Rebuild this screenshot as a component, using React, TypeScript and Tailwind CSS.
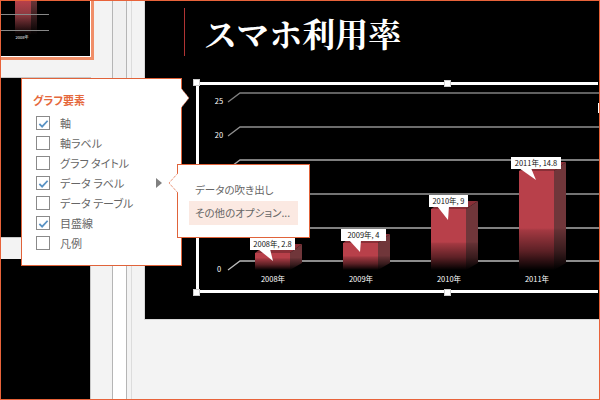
const font = { fontFamily: '"Noto Sans CJK JP", "Liberation Sans", sans-serif' };

const options = [
  { label: "軸", checked: true },
  { label: "軸ラベル", checked: false },
  { label: "グラフ タイトル", checked: false },
  { label: "データ ラベル", checked: true, more: true },
  { label: "データ テーブル", checked: false },
  { label: "目盛線", checked: true },
  { label: "凡例", checked: false },
];

const bars = [
  { id: "a", x: 254, top: 253, sideTop: 244, fade: 258, axis: "2008年", label: "2008年, 2.8", lx: 249, ly: 238, lw: 45, tip: [272, 261] },
  { id: "b", x: 342, top: 243, sideTop: 234, fade: 256, axis: "2009年", label: "2009年, 4", lx: 340, ly: 229, lw: 45, tip: [359, 252] },
  { id: "c", x: 430, top: 209, sideTop: 201, fade: 242, axis: "2010年", label: "2010年, 9", lx: 428, ly: 195, lw: 39, tip: [447, 220] },
  { id: "d", x: 518, top: 171, sideTop: 162, fade: 228, axis: "2011年", label: "2011年, 14.8", lx: 510, ly: 157, lw: 50, tip: [535, 180] },
];

// 15, 10 and 5 sit behind the popups, so they have no label here
const grid = [
  { y: 93, label: "25", color: "#808080" },
  { y: 127, label: "20", color: "#909090" },
  { y: 160, label: "", color: "#a8a8a8" },
  { y: 194, label: "", color: "#999999" },
  { y: 228, label: "", color: "#aaaaaa" },
  { y: 261, label: "0", color: "#bbbbbb" },
];

function Thumbnail() {
  return (
    <svg viewBox="0 0 89 55" className="h-full w-full" style={font}>
      <defs>
        <linearGradient id="thumb-front" x1="0" x2="0" y1="0" y2="1">
          <stop offset="0" stopColor="#b8404a" />
          <stop offset="0.4" stopColor="#8c3a40" />
          <stop offset="1" stopColor="#000" />
        </linearGradient>
        <linearGradient id="thumb-side" x1="0" x2="0" y1="0" y2="1">
          <stop offset="0" stopColor="#6a3538" />
          <stop offset="1" stopColor="#000" />
        </linearGradient>
      </defs>
      <rect x="14" y="0" width="16" height="34" fill="url(#thumb-front)" />
      <rect x="30" y="0" width="6" height="34" fill="url(#thumb-side)" />
      <path d="M0 13.5H48M0 29.5H48" stroke="#888" strokeWidth="1" />
      <text x="21" y="38" textAnchor="middle" fontSize="4" fill="#fff">2008年</text>
    </svg>
  );
}

function Chart() {
  return (
    <svg viewBox="195 82 404 211" className="absolute left-[-3px] top-[-3px] h-[211px] w-[404px]" style={font}>
      <defs>
        {bars.map((b) => (
          <linearGradient key={b.id} id={`fade-${b.id}`} gradientUnits="userSpaceOnUse" x1="0" x2="0" y1={b.fade} y2="270">
            <stop offset="0" stopColor="#000" stopOpacity="0" />
            <stop offset="0.06" stopColor="#000" stopOpacity="0.12" />
            <stop offset="0.55" stopColor="#000" stopOpacity="0.5" />
            <stop offset="1" stopColor="#000" stopOpacity="1" />
          </linearGradient>
        ))}
      </defs>
      {grid.map((g) => (
        <g key={g.y}>
          <path d={`M227 ${g.y + 9}L239 ${g.y}H598`} fill="none" stroke={g.color} strokeWidth="1.3" />
          <text x="218" y={g.y + 11} textAnchor="middle" fontSize="7.5" fill="#fff">{g.label}</text>
        </g>
      ))}
      {bars.map((b) => (
        <g key={b.id}>
          <polygon points={`${b.x},${b.top} ${b.x + 12},${b.sideTop} ${b.x + 47},${b.sideTop} ${b.x + 35},${b.top}`} fill="#8a2f37" />
          <polygon points={`${b.x + 35},${b.top} ${b.x + 47},${b.sideTop} ${b.x + 47},263 ${b.x + 35},270`} fill="#70363a" />
          <rect x={b.x} y={b.top} width="35" height={270 - b.top} fill="#b8404a" />
          <rect x={b.x} y={b.fade} width="47" height={270 - b.fade} fill={`url(#fade-${b.id})`} />
          <polygon points={`${b.lx + 8},${b.ly + 11} ${b.tip[0]},${b.tip[1]} ${b.lx + 20},${b.ly + 11}`} fill="#fff" />
          <rect x={b.lx} y={b.ly} width={b.lw} height="12" fill="#fff" />
          <text x={b.lx + b.lw / 2} y={b.ly + 9} textAnchor="middle" fontSize="7.5" fill="#111">{b.label}</text>
          <text x={b.x + 18} y="282" textAnchor="middle" fontSize="7.5" fill="#fff">{b.axis}</text>
        </g>
      ))}
    </svg>
  );
}

function Handle({ className }: { className: string }) {
  return <div className={`absolute h-[7px] w-[7px] border border-[#ccc] bg-white ${className}`} />;
}

function Check({ checked }: { checked: boolean }) {
  return (
    <span className="flex h-[14px] w-[14px] items-center justify-center border border-[#8a8a8a] bg-white">
      {checked && (
        <svg viewBox="0 0 12 12" className="h-[11px] w-[11px]">
          <path d="M1.5 6.5L4.5 9.5L10.5 3" fill="none" stroke="#5b93c4" strokeWidth="2" />
        </svg>
      )}
    </span>
  );
}

function ElementsPopup() {
  return (
    <div className="absolute left-[20px] top-[77px] h-[188px] w-[161px] border border-[#e0633a] bg-white pl-[11px] pt-[13px] [font-feature-settings:'palt']">
      <div className="text-[11px] font-bold leading-[16px] text-[#e5683c]">グラフ要素</div>
      <div className="mt-[8px] flex w-[129px] flex-col gap-[6px] pl-[3px]">
        {options.map((o) => (
          <div key={o.label} className="flex h-[14px] items-center gap-[10px] text-[11px] text-[#666]">
            <Check checked={o.checked} />
            <span className="flex-1">{o.label}</span>
            {o.more && (
              <span className="h-0 w-0 border-y-[5px] border-l-[6px] border-y-transparent border-l-[#808080]" />
            )}
          </div>
        ))}
      </div>
      <svg viewBox="0 0 9 20" className="absolute left-[159px] top-[9px] h-[20px] w-[9px]">
        <path d="M0 0L8 10L0 20" fill="#fff" stroke="#e0633a" strokeWidth="1" strokeDasharray="1 1" />
      </svg>
    </div>
  );
}

function DetailPopup() {
  return (
    <div className="absolute left-[176px] top-[163px] h-[74px] w-[133px] border border-[#e0633a] bg-white pl-[11px] pt-[15px] text-[10.5px] text-[#666] [font-feature-settings:'palt']">
      <div className="h-[21px] whitespace-nowrap pl-[6px] leading-[20px]">データの吹き出し</div>
      <div className="h-[24px] w-[109px] whitespace-nowrap bg-[#fbe9e2] pl-[6px] leading-[24px]">その他のオプション...</div>
      <svg viewBox="0 0 10 20" className="absolute left-[-10px] top-[8px] h-[20px] w-[10px]">
        <path d="M10 0L1 10L10 20" fill="#fff" stroke="#e0633a" strokeWidth="1" strokeDasharray="1 1" />
      </svg>
    </div>
  );
}

export default function App() {
  return (
    <div className="relative flex h-[400px] w-[600px] overflow-hidden border border-[#e8633a] bg-[#f3f3f3]" style={font}>
      <div className="flex w-[112px] shrink-0 flex-col border-r border-[#b5b5b5]">
        <div className="h-[59px] w-[93px] border-b-[3px] border-r-[3px] border-[#f08e68]">
          <div className="h-full overflow-hidden border-b border-r border-white bg-black">
            <Thumbnail />
          </div>
        </div>
        <div className="mt-[17px] h-[161px] w-[90px] border-y border-r border-[#c8c8c8] bg-black" />
        <div className="mt-[21px] min-h-0 w-[90px] flex-1 border-r border-[#c8c8c8] bg-black" />
      </div>
      <div className="flex w-[13px] shrink-0 flex-col">
        <div className="h-[100px] bg-[#f0f0f0]" />
        <div className="flex-1 bg-white" />
      </div>
      <div className="w-[5px] shrink-0 border-l border-[#b5b5b5]" />
      <div className="w-[13px] shrink-0 border-l border-[#dcdcdc]" />
      <div className="h-[319px] min-w-0 flex-1 border-b border-l border-[#d8d8d8] bg-black">
        <div className="ml-[39px] mt-[7px] flex h-[48px] items-center border-l border-[#b03434] pl-[19px]">
          <h1 className="text-[33px] font-bold leading-none text-white" style={{ fontFamily: '"Noto Serif CJK JP", serif' }}>
            スマホ利用率
          </h1>
        </div>
        <div className="relative ml-[51px] mt-[26px] h-[211px] w-[402px] border-y-[3px] border-l-[3px] border-white">
          <Chart />
          <Handle className="left-[-6px] top-[-6px]" />
          <Handle className="left-[-6px] bottom-[-6px]" />
          <Handle className="left-[245px] top-[-5px]" />
          <Handle className="left-[245px] bottom-[-6px]" />
          <div className="absolute left-[399px] top-[18px] h-[10px] w-[3px] bg-white" />
        </div>
      </div>
      <ElementsPopup />
      <DetailPopup />
    </div>
  );
}
